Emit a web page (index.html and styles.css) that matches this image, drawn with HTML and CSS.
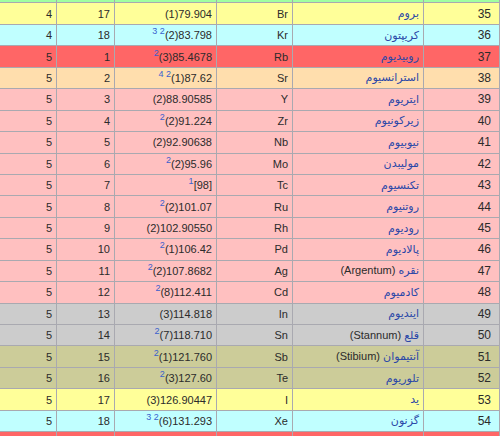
FILE: index.html
```html
<!DOCTYPE html>
<html lang="fa" dir="rtl">
<head>
    <meta charset="UTF-8">
    <title>عناصر دوره پنجم</title>
    <link rel="stylesheet" href="styles.css">
</head>
<body>
    <table class="elements">
        <colgroup>
            <col class="c-num">
            <col class="c-name">
            <col class="c-sym">
            <col class="c-weight">
            <col class="c-group">
            <col class="c-period">
        </colgroup>
        <tbody>
            <tr class="nonmetal"><td class="num">34</td><td><a href="#">سلنیوم</a></td><td>Se</td><td>78.971(8)</td><td>16</td><td>4</td></tr>
            <tr class="halogen"><td class="num">35</td><td><a href="#">بروم</a></td><td>Br</td><td>79.904(1)</td><td>17</td><td>4</td></tr>
            <tr class="noble"><td class="num">36</td><td><a href="#">کریپتون</a></td><td>Kr</td><td>83.798(2)<sup>2 3</sup></td><td>18</td><td>4</td></tr>
            <tr class="alkali"><td class="num">37</td><td><a href="#">روبیدیوم</a></td><td>Rb</td><td>85.4678(3)<sup>2</sup></td><td>1</td><td>5</td></tr>
            <tr class="earth"><td class="num">38</td><td><a href="#">استرانسیوم</a></td><td>Sr</td><td>87.62(1)<sup>2 4</sup></td><td>2</td><td>5</td></tr>
            <tr class="transition"><td class="num">39</td><td><a href="#">ایتریوم</a></td><td>Y</td><td>88.90585(2)</td><td>3</td><td>5</td></tr>
            <tr class="transition"><td class="num">40</td><td><a href="#">زیرکونیوم</a></td><td>Zr</td><td>91.224(2)<sup>2</sup></td><td>4</td><td>5</td></tr>
            <tr class="transition"><td class="num">41</td><td><a href="#">نیوبیوم</a></td><td>Nb</td><td>92.90638(2)</td><td>5</td><td>5</td></tr>
            <tr class="transition"><td class="num">42</td><td><a href="#">مولیبدن</a></td><td>Mo</td><td>95.96(2)<sup>2</sup></td><td>6</td><td>5</td></tr>
            <tr class="transition"><td class="num">43</td><td><a href="#">تکنسیوم</a></td><td>Tc</td><td>[98]<sup>1</sup></td><td>7</td><td>5</td></tr>
            <tr class="transition"><td class="num">44</td><td><a href="#">روتنیوم</a></td><td>Ru</td><td>101.07(2)<sup>2</sup></td><td>8</td><td>5</td></tr>
            <tr class="transition"><td class="num">45</td><td><a href="#">رودیوم</a></td><td>Rh</td><td>102.90550(2)</td><td>9</td><td>5</td></tr>
            <tr class="transition"><td class="num">46</td><td><a href="#">پالادیوم</a></td><td>Pd</td><td>106.42(1)<sup>2</sup></td><td>10</td><td>5</td></tr>
            <tr class="transition"><td class="num">47</td><td><a href="#">نقره</a> (Argentum)</td><td>Ag</td><td>107.8682(2)<sup>2</sup></td><td>11</td><td>5</td></tr>
            <tr class="transition"><td class="num">48</td><td><a href="#">کادمیوم</a></td><td>Cd</td><td>112.411(8)<sup>2</sup></td><td>12</td><td>5</td></tr>
            <tr class="post"><td class="num">49</td><td><a href="#">ایندیوم</a></td><td>In</td><td>114.818(3)</td><td>13</td><td>5</td></tr>
            <tr class="post"><td class="num">50</td><td><a href="#">قلع</a> (Stannum)</td><td>Sn</td><td>118.710(7)<sup>2</sup></td><td>14</td><td>5</td></tr>
            <tr class="metalloid"><td class="num">51</td><td><a href="#">آنتیموان</a> (Stibium)</td><td>Sb</td><td>121.760(1)<sup>2</sup></td><td>15</td><td>5</td></tr>
            <tr class="metalloid"><td class="num">52</td><td><a href="#">تلوریوم</a></td><td>Te</td><td>127.60(3)<sup>2</sup></td><td>16</td><td>5</td></tr>
            <tr class="halogen"><td class="num">53</td><td><a href="#">ید</a></td><td>I</td><td>126.90447(3)</td><td>17</td><td>5</td></tr>
            <tr class="noble"><td class="num">54</td><td><a href="#">گزنون</a></td><td>Xe</td><td>131.293(6)<sup>2 3</sup></td><td>18</td><td>5</td></tr>
            <tr class="alkali"><td class="num">55</td><td><a href="#">سزیم</a></td><td>Cs</td><td>132.90545196(6)</td><td>1</td><td>6</td></tr>
        </tbody>
    </table>
</body>
</html>
```

FILE: styles.css
```css
html, body {
    margin: 0;
    overflow: hidden;
}
body {
    font-family: "Liberation Sans", "DejaVu Sans", sans-serif;
    font-size: 11px;
    color: #2b2b2b;
    background: #fff;
}
.elements {
    width: 501px;
    margin-top: -19px;
    border-collapse: collapse;
    table-layout: fixed;
}
.c-num { width: 76px; }
.c-name { width: 131px; }
.c-sym { width: 76px; }
.c-weight { width: 102px; }
.c-group { width: 58px; }
.c-period { width: 58px; }
.elements tr {
    height: 21.45px;
}
.elements td {
    border: 1px solid #a9a9b0;
    padding: 0 4px 0 4px;
    text-align: right;
    white-space: nowrap;
    overflow: hidden;
}
.elements td.num {
    padding-right: 8px;
    font-size: 12px;
}
.elements a {
    color: #2a47a8;
    text-decoration: none;
    font-family: "DejaVu Sans", sans-serif;
    font-size: 11px;
}
.elements sup {
    color: #3a5fcd;
    font-size: 9px;
    line-height: 0;
}
.nonmetal { background-color: #a0ffa0; }
.halogen { background-color: #ffff99; }
.noble { background-color: #c0ffff; }
.alkali { background-color: #ff6666; }
.earth { background-color: #ffdead; }
.transition { background-color: #ffc0c0; }
.post { background-color: #cccccc; }
.metalloid { background-color: #cccc99; }
```
